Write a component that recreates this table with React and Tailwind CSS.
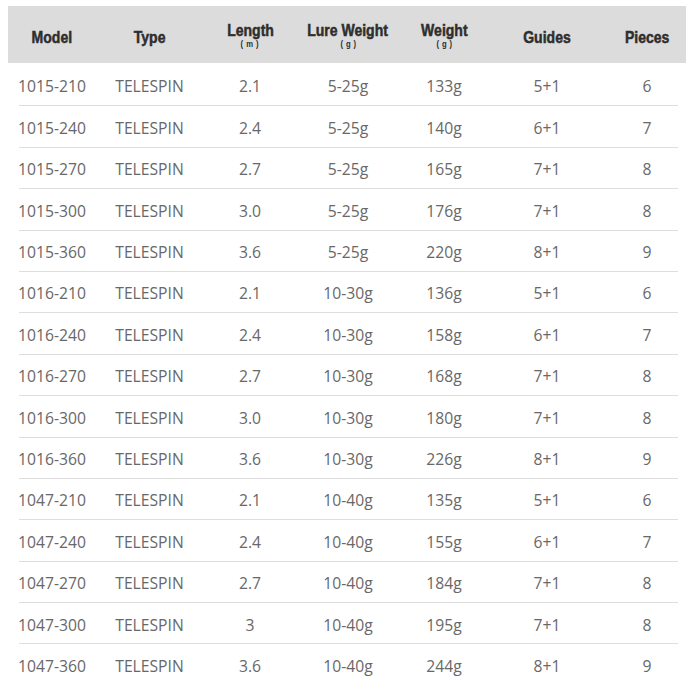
import React from 'react'

const rods = [
  ['1015-210', 'TELESPIN', '2.1', '5-25g', '133g', '5+1', '6'],
  ['1015-240', 'TELESPIN', '2.4', '5-25g', '140g', '6+1', '7'],
  ['1015-270', 'TELESPIN', '2.7', '5-25g', '165g', '7+1', '8'],
  ['1015-300', 'TELESPIN', '3.0', '5-25g', '176g', '7+1', '8'],
  ['1015-360', 'TELESPIN', '3.6', '5-25g', '220g', '8+1', '9'],
  ['1016-210', 'TELESPIN', '2.1', '10-30g', '136g', '5+1', '6'],
  ['1016-240', 'TELESPIN', '2.4', '10-30g', '158g', '6+1', '7'],
  ['1016-270', 'TELESPIN', '2.7', '10-30g', '168g', '7+1', '8'],
  ['1016-300', 'TELESPIN', '3.0', '10-30g', '180g', '7+1', '8'],
  ['1016-360', 'TELESPIN', '3.6', '10-30g', '226g', '8+1', '9'],
  ['1047-210', 'TELESPIN', '2.1', '10-40g', '135g', '5+1', '6'],
  ['1047-240', 'TELESPIN', '2.4', '10-40g', '155g', '6+1', '7'],
  ['1047-270', 'TELESPIN', '2.7', '10-40g', '184g', '7+1', '8'],
  ['1047-300', 'TELESPIN', '3', '10-40g', '195g', '7+1', '8'],
  ['1047-360', 'TELESPIN', '3.6', '10-40g', '244g', '8+1', '9'],
]

const headers = [
  { title: 'Model' },
  { title: 'Type' },
  { title: 'Length', unit: '( m )' },
  { title: 'Lure Weight', unit: '( g )' },
  { title: 'Weight', unit: '( g )' },
  { title: 'Guides' },
  { title: 'Pieces' },
]

const cols = 'grid grid-cols-[88px_107px_94px_102px_90px_116px_81px]'

function App() {
  return (
    <div className="w-[693px] h-[693px] bg-white overflow-hidden pt-[6px]">
      <div className="ml-[8px] w-[678px]">
        <div className={`${cols} h-[57px] pt-[4px] bg-[#dcdcdc] text-[#2e2e2e] font-bold font-['Liberation_Sans',sans-serif]`}>
          {headers.map((h, i) => (
            <div
              key={h.title}
              className={`flex flex-col items-center justify-center ${i === 6 ? 'pl-[3px]' : ''}`}
            >
              <span className={`inline-block whitespace-nowrap scale-x-[0.85] text-[16.5px] leading-[18px] [-webkit-text-stroke:0.5px_#2e2e2e] ${h.unit ? 'mt-[-3px]' : ''}`}>
                {h.title}
              </span>
              {h.unit && (
                <span className="inline-block scale-x-[0.85] text-[9px] leading-[9px] mt-[1px] tracking-[0.5px] whitespace-pre">{h.unit}</span>
              )}
            </div>
          ))}
        </div>

        <div className="pt-[2px] text-[#686868] text-[15.7px] font-['Open_Sans',sans-serif]">
          {rods.map((row, r) => (
            <div key={row[0]}>
              <div className={`${cols} h-[40.4px] pt-[4px] items-center`}>
                {row.map((cell, c) => (
                  <div key={c} className={`text-center ${c === 6 ? 'pl-[3px]' : ''}`}>
                    {cell}
                  </div>
                ))}
              </div>
              {r < rods.length - 1 && <div className="h-px ml-[11px] mr-[8px] bg-[#dedede]" />}
            </div>
          ))}
        </div>
      </div>
    </div>
  )
}

export default App
